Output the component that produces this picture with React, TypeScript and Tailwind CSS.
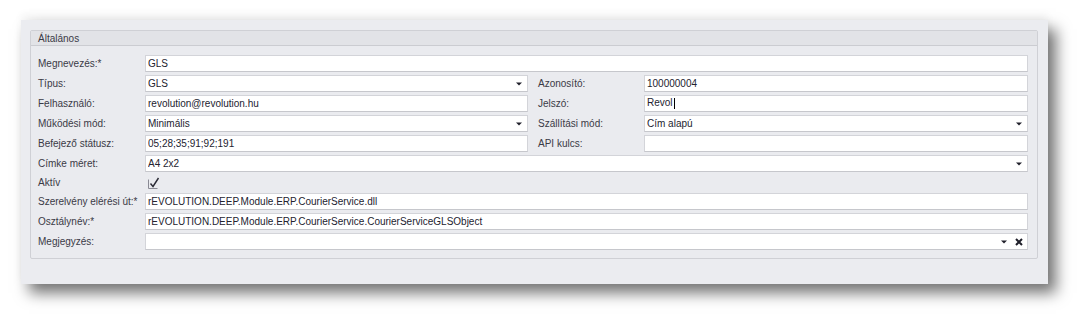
import React from 'react';

const font = { fontFamily: '"Liberation Sans", Arial, sans-serif' };

const Arrow = () => (
    <svg width="6" height="4" viewBox="0 0 6 4" className="shrink-0 mr-[1px]">
        <path d="M0 0.5H6L3 3.5Z" fill="#1f1f2a" />
    </svg>
);

interface FieldProps {
    value?: string;
    dropdown?: boolean;
    clear?: boolean;
    cursor?: boolean;
    wide?: boolean;
}

const Field: React.FC<FieldProps> = ({ value = '', dropdown, clear, cursor, wide }) => (
    <div
        className={`h-[17px] bg-white border border-[#d3d4d9] border-b-[#c6c7cc] flex items-center pl-[2px] pr-[4px] text-[10px] text-[#23232f] ${wide ? 'col-span-3' : ''}`}
    >
        <span className="flex-1 whitespace-nowrap overflow-hidden leading-none">
            {value}
            {cursor && <span className="inline-block w-[1px] h-[12px] bg-black align-middle ml-[1px] -mt-[2px]" />}
        </span>
        {dropdown && <Arrow />}
        {clear && (
            <svg width="8" height="8" viewBox="0 0 8 8" className="ml-[7px] shrink-0">
                <path d="M1 1L7 7M7 1L1 7" stroke="#1f1f2a" strokeWidth="2" />
            </svg>
        )}
    </div>
);

const Label: React.FC<{ text: string; right?: boolean }> = ({ text, right }) => (
    <div className={`h-[17px] flex items-center text-[10px] text-[#3a3a46] whitespace-nowrap ${right ? 'pl-[10px]' : ''}`}>
        {text}
    </div>
);

export default function App() {
    return (
        <div className="w-[1090px] h-[327px] bg-white pt-[20px] pl-[21px]" style={font}>
            <div className="w-[1027px] h-[264px] bg-[#ebecf0] pt-[10px] pl-[9px] pr-[10px] shadow-[8px_9px_14px_rgba(0,0,0,0.55),0_-6px_8px_rgba(0,0,0,0.04)]">
                <div className="h-[229px] border border-[#cfd0d5] rounded-[2px] bg-[#eaebef]">
                    <div className="h-[15px] bg-[#e2e3e7] border-b border-[#cbccd1] flex items-center pl-[7px] text-[10px] text-[#3a3a46]">
                        Általános
                    </div>
                    <div className="pt-[9px] pl-[7px] pr-[9px] grid grid-cols-[107px_383px_116px_1fr] gap-y-[3px]">
                        <Label text="Megnevezés:*" />
                        <Field value="GLS" wide />

                        <Label text="Típus:" />
                        <Field value="GLS" dropdown />
                        <Label text="Azonosító:" right />
                        <Field value="100000004" />

                        <Label text="Felhasználó:" />
                        <Field value="revolution@revolution.hu" />
                        <Label text="Jelszó:" right />
                        <Field value="Revol" cursor />

                        <Label text="Működési mód:" />
                        <Field value="Minimális" dropdown />
                        <Label text="Szállítási mód:" right />
                        <Field value="Cím alapú" dropdown />

                        <Label text="Befejező státusz:" />
                        <Field value="05;28;35;91;92;191" />
                        <Label text="API kulcs:" right />
                        <Field />

                        <Label text="Címke méret:" />
                        <Field value="A4 2x2" dropdown wide />

                        <div className="h-[15px] flex items-center text-[10px] text-[#3a3a46]">Aktív</div>
                        <div className="h-[15px] col-span-3 flex items-center pl-[3px]">
                            <svg width="12" height="12" viewBox="0 0 12 12">
                                <path d="M0.5 2.5V11.5H9.5" fill="none" stroke="#8a8a94" strokeWidth="1" />
                                <path d="M2.5 6.5L5 9.5L10.5 1" fill="none" stroke="#2a2a35" strokeWidth="1.4" />
                            </svg>
                        </div>

                        <Label text="Szerelvény elérési út:*" />
                        <Field value="rEVOLUTION.DEEP.Module.ERP.CourierService.dll" wide />

                        <Label text="Osztálynév:*" />
                        <Field value="rEVOLUTION.DEEP.Module.ERP.CourierService.CourierServiceGLSObject" wide />

                        <Label text="Megjegyzés:" />
                        <Field dropdown clear wide />
                    </div>
                </div>
            </div>
        </div>
    );
}
